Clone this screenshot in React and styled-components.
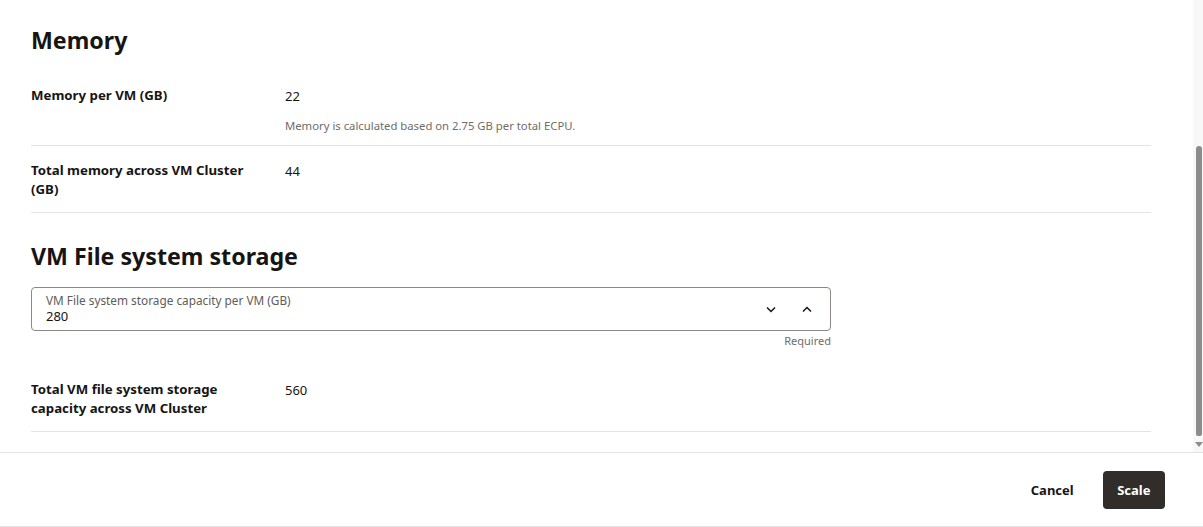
import React from "react";
import styled, { createGlobalStyle } from "styled-components";

const Global = createGlobalStyle`
  html, body { margin: 0; padding: 0; background: #fff; }
  body { font-family: "Noto Sans", "Open Sans", sans-serif; color: #161513; }
`;

const Page = styled.div`
  width: 1203px;
  height: 527px;
  display: flex;
  flex-direction: column;
  overflow: hidden;
`;

const Body = styled.div`
  height: 452px;
  display: flex;
  border-bottom: 1px solid #e4e3e2;
`;

const Content = styled.div`
  flex: 1;
  padding: 0 42px 0 31px;
`;

const Track = styled.div`
  width: 10px;
  background: #f8f8f8;
  position: relative;
`;

const Thumb = styled.div`
  position: absolute;
  left: 3px;
  width: 6px;
  top: 146px;
  height: 290px;
  background: #8c8c8c;
  border-radius: 3px 3px 2px 2px;
`;

const Arrow = styled.div`
  position: absolute;
  left: 2px;
  top: 442px;
  width: 0;
  height: 0;
  border-left: 4px solid transparent;
  border-right: 4px solid transparent;
  border-top: 5px solid #8c8c8c;
`;

const Heading = styled.h2`
  margin: 0;
  font-size: 23.2px;
  font-weight: 700;
  line-height: 32px;
  padding: ${(p) => p.$pad};
`;

const Row = styled.div`
  display: grid;
  grid-template-columns: 254px 1fr;
  border-bottom: 1px solid #e4e3e2;
  padding: ${(p) => p.$pad};
`;

const Label = styled.div`
  font-size: 13.25px;
  font-weight: 700;
  line-height: 19px;
`;

const Value = styled.div`
  font-size: 13px;
  line-height: 19px;
  padding-top: 1px;
`;

const Help = styled.div`
  font-size: 11.3px;
  color: #6f6c69;
  line-height: 16px;
  margin-top: 12px;
`;

const FieldWrap = styled.div`
  width: 800px;
  margin-bottom: 31px;
`;

const Field = styled.div`
  height: 42px;
  border: 1px solid #8b8885;
  border-radius: 4px;
  display: flex;
  align-items: center;
  padding: 0 14px;
`;

const FieldText = styled.div`
  flex: 1;
  display: flex;
  flex-direction: column;
`;

const FieldLabel = styled.div`
  font-size: 11.8px;
  color: #5f5c59;
  line-height: 15px;
`;

const FieldValue = styled.div`
  font-size: 13px;
  line-height: 17px;
`;

const Spin = styled.div`
  display: flex;
  gap: 26px;
  align-items: center;
  margin-right: 4px;
`;

const Assist = styled.div`
  font-size: 11px;
  color: #6f6c69;
  text-align: right;
  line-height: 16px;
  margin-top: 2px;
`;

const Footer = styled.div`
  height: 73px;
  border-bottom: 1px solid #e4e3e2;
  display: flex;
  justify-content: flex-end;
  align-items: center;
  gap: 29px;
  padding-right: 38px;
`;

const TextButton = styled.button`
  border: none;
  background: none;
  font-family: inherit;
  font-size: 13px;
  font-weight: 700;
  color: #161513;
  padding: 0;
`;

const PrimaryButton = styled.button`
  border: none;
  background: #312d2a;
  color: #fff;
  font-family: inherit;
  font-size: 13px;
  font-weight: 700;
  border-radius: 4px;
  height: 38px;
  padding: 0 14.5px;
`;

const Chevron = ({ up }) => (
  <svg width="10" height="7" viewBox="0 0 10 7">
    <path
      d={up ? "M1 5.5 L5 1.5 L9 5.5" : "M1 1.5 L5 5.5 L9 1.5"}
      fill="none"
      stroke="#161513"
      strokeWidth="1.5"
    />
  </svg>
);

export default function App() {
  return (
    <>
      <Global />
      <Page>
        <Body>
          <Content>
            <Heading $pad="24px 0 30px">Memory</Heading>
            <Row $pad="0 0 11px">
              <Label>Memory per VM (GB)</Label>
              <div>
                <Value>22</Value>
                <Help>Memory is calculated based on 2.75 GB per total ECPU.</Help>
              </div>
            </Row>
            <Row $pad="15px 0 13px">
              <Label>Total memory across VM Cluster<br />(GB)</Label>
              <Value>44</Value>
            </Row>
            <Heading $pad="27px 0 15px">VM File system storage</Heading>
            <FieldWrap>
              <Field>
                <FieldText>
                  <FieldLabel>VM File system storage capacity per VM (GB)</FieldLabel>
                  <FieldValue>280</FieldValue>
                </FieldText>
                <Spin>
                  <Chevron />
                  <Chevron up />
                </Spin>
              </Field>
              <Assist>Required</Assist>
            </FieldWrap>
            <Row $pad="0 0 13px">
              <Label>Total VM file system storage<br />capacity across VM Cluster</Label>
              <Value>560</Value>
            </Row>
          </Content>
          <Track>
            <Thumb />
            <Arrow />
          </Track>
        </Body>
        <Footer>
          <TextButton>Cancel</TextButton>
          <PrimaryButton>Scale</PrimaryButton>
        </Footer>
      </Page>
    </>
  );
}
